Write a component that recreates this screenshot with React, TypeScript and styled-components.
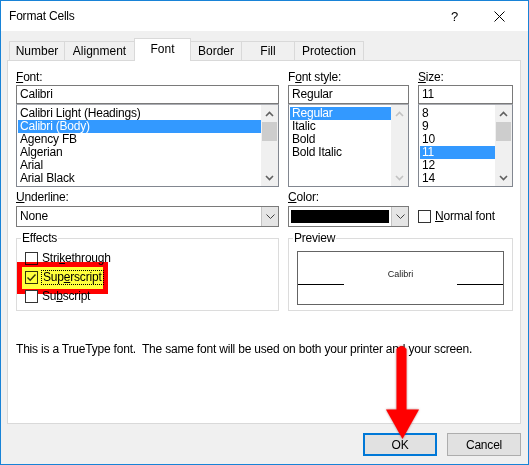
import React from 'react';
import styled, { createGlobalStyle } from 'styled-components';

const Global = createGlobalStyle`
  html, body { margin: 0; padding: 0; background: #ffffff; }
  body { font-family: "Liberation Sans", Arial, sans-serif; font-size: 12px; color: #000; letter-spacing: -0.2px; }
  * { box-sizing: border-box; }
  u { text-underline-offset: 1px; }
`;

const Window = styled.div`
  position: relative;
  width: 529px;
  height: 465px;
  border: 1px solid #1883d7;
  background: #f0f0f0;
  display: flex;
  flex-direction: column;
`;

const TitleBar = styled.div`
  height: 30px;
  background: #ffffff;
  display: flex;
  align-items: center;
  padding-left: 8px;
`;

const Title = styled.div`
  flex: 1;
  font-size: 12px;
  line-height: 15px;
`;

const Help = styled.div`
  font-size: 13px;
  line-height: 15px;
  margin-right: 36px;
`;

const Close = styled.svg`
  width: 11px;
  height: 11px;
  margin-right: 23px;
`;

const Body = styled.div`
  flex: 1;
  display: flex;
  flex-direction: column;
  padding: 7px 7px 0 6px;
`;

const TabStrip = styled.div`
  height: 22px;
  display: flex;
  align-items: flex-start;
  padding-left: 2px;
  position: relative;
  z-index: 1;
`;

const Tab = styled.div<{ $w: number; $active?: boolean }>`
  width: ${p => p.$w}px;
  height: ${p => (p.$active ? 23 : 19)}px;
  margin-top: ${p => (p.$active ? 0 : 3)}px;
  margin-left: -1px;
  &:first-child { margin-left: 0; }
  border: 1px solid #d9d9d9;
  border-bottom: none;
  background: ${p => (p.$active ? '#ffffff' : '#f0f0f0')};
  display: flex;
  align-items: center;
  justify-content: center;
  padding-bottom: ${p => (p.$active ? 2 : 0)}px;
  font-size: 12px;
  letter-spacing: 0;
  position: relative;
  z-index: ${p => (p.$active ? 2 : 1)};
`;

const Panel = styled.div`
  width: 514px;
  height: 364px;
  border: 1px solid #d9d9d9;
  background: #ffffff;
  padding: 9px 7px 0 8px;
  display: flex;
  flex-direction: column;
`;

const Grid = styled.div<{ $mt?: number }>`
  display: grid;
  grid-template-columns: 263px 121px 95px;
  column-gap: 9px;
  margin-top: ${p => p.$mt ?? 0}px;
`;

const Field = styled.div`
  display: flex;
  flex-direction: column;
`;

const Label = styled.div<{ $mb?: number }>`
  line-height: 15px;
  height: 15px;
  margin-bottom: ${p => p.$mb ?? 0}px;
  white-space: nowrap;
`;

const TextBox = styled.div`
  height: 19px;
  border: 1px solid #7a7a7a;
  padding-left: 3px;
  line-height: 17px;
  background: #fff;
`;

const ListBox = styled.div`
  height: 83px;
  border: 1px solid #828790;
  border-top-color: #abadb3;
  display: flex;
  background: #fff;
`;

const Items = styled.div`
  flex: 1;
  padding: 2px 0 0 1px;
  overflow: hidden;
`;

const Item = styled.div<{ $sel?: boolean }>`
  height: 13px;
  line-height: 13px;
  padding-left: 2px;
  white-space: nowrap;
  background: ${p => (p.$sel ? '#3399ff' : 'transparent')};
  color: ${p => (p.$sel ? '#ffffff' : '#000000')};
`;

const ScrollBar = styled.div`
  width: 17px;
  background: #f0f0f0;
  display: flex;
  flex-direction: column;
`;

const ScrollButton = styled.div`
  height: 17px;
  display: flex;
  align-items: center;
  justify-content: center;
`;

const Thumb = styled.div`
  height: 19px;
  margin: 0 1px;
  background: #cdcdcd;
`;

const Spacer = styled.div`
  flex: 1;
`;

const Select = styled.div`
  height: 21px;
  border: 1px solid #7a7a7a;
  display: flex;
  align-items: stretch;
  background: #fff;
`;

const SelectValue = styled.div`
  flex: 1;
  padding-left: 3px;
  line-height: 19px;
`;

const Swatch = styled.div`
  flex: 1;
  margin: 3px 2px 3px 2px;
  background: #000;
`;

const DropButton = styled.div`
  width: 17px;
  background: #e5e5e5;
  border-left: 1px solid #c4c4c4;
  display: flex;
  align-items: center;
  justify-content: center;
`;

const CheckRow = styled.div`
  position: relative;
  height: 19px;
  display: flex;
  align-items: center;
`;

const CheckBox = styled.div`
  width: 13px;
  height: 13px;
  border: 1px solid #333333;
  background: #ffffff;
  display: flex;
  align-items: center;
  justify-content: center;
  flex: none;
`;

const CheckText = styled.span<{ $focus?: boolean }>`
  margin-left: ${p => (p.$focus ? 3 : 4)}px;
  padding: 0 ${p => (p.$focus ? 1 : 0)}px;
  line-height: 13px;
  border: ${p => (p.$focus ? '1px dotted #000' : 'none')};
  white-space: nowrap;
`;

const NormalFont = styled.div`
  display: flex;
  align-items: center;
  height: 21px;
  margin-top: 16px;
`;

const Group = styled.fieldset<{ $pt: number; $span?: boolean }>`
  margin: 4px 0 0 0;
  min-inline-size: 0;
  border: 1px solid #dcdcdc;
  padding: ${p => p.$pt}px 8px 4px 8px;
  display: flex;
  flex-direction: column;
  grid-column: ${p => (p.$span ? '2 / 4' : 'auto')};
`;

const Legend = styled.legend`
  padding: 0 1px;
  margin-left: -4px;
  line-height: 15px;
`;

const PreviewBox = styled.div`
  height: 54px;
  border: 1px solid #646464;
`;

const BaselineRow = styled.div`
  height: 33px;
  display: flex;
  align-items: flex-end;
`;

const BaseLine = styled.div`
  width: 46px;
  height: 1px;
  background: #000;
`;

const Sample = styled.div`
  flex: 1;
  text-align: center;
  font-size: 9px;
  letter-spacing: 0;
  line-height: 11px;
  margin-bottom: 5px;
  color: #1a1a1a;
`;

const Info = styled.div`
  margin-top: 31px;
  line-height: 15px;
  white-space: pre;
`;

const ButtonRow = styled.div`
  display: flex;
  justify-content: flex-end;
  gap: 10px;
  margin-top: 9px;
`;

const Button = styled.div<{ $default?: boolean }>`
  width: 74px;
  height: 23px;
  background: #e1e1e1;
  border: ${p => (p.$default ? '2px solid #0078d7' : '1px solid #adadad')};
  display: flex;
  align-items: center;
  justify-content: center;
  font-size: 12px;
`;

const Highlight = styled.div`
  position: absolute;
  left: -8px;
  top: -6px;
  width: 91px;
  height: 32px;
  border: 5px solid #ff0000;
  background: #ffff3c;
  mix-blend-mode: multiply;
  pointer-events: none;
`;

const Arrow = styled.svg`
  position: absolute;
  left: 384px;
  top: 341px;
  width: 36px;
  height: 100px;
  z-index: 5;
  overflow: visible;
  filter: drop-shadow(0 0 1px rgba(120, 0, 0, 0.5));
`;

const Chevron = ({ up, disabled }: { up?: boolean; disabled?: boolean }) => (
  <svg width="9" height="6" viewBox="0 0 9 6">
    <polyline
      points={up ? '1,5 4.5,1.5 8,5' : '1,1 4.5,4.5 8,1'}
      fill="none"
      stroke={disabled ? '#c2c2c2' : '#606060'}
      strokeWidth="1.6"
    />
  </svg>
);

const DropChevron = () => (
  <svg width="9" height="5" viewBox="0 0 9 5">
    <polyline points="0.5,0.5 4.5,4.5 8.5,0.5" fill="none" stroke="#404040" strokeWidth="1" />
  </svg>
);

const Scroll = ({ thumb, disabled }: { thumb?: boolean; disabled?: boolean }) => (
  <ScrollBar>
    <ScrollButton>
      <Chevron up disabled={disabled} />
    </ScrollButton>
    {thumb && <Thumb />}
    <Spacer />
    <ScrollButton>
      <Chevron disabled={disabled} />
    </ScrollButton>
  </ScrollBar>
);

const fonts = ['Calibri Light (Headings)', 'Calibri (Body)', 'Agency FB', 'Algerian', 'Arial', 'Arial Black'];
const styles = ['Regular', 'Italic', 'Bold', 'Bold Italic'];
const sizes = ['8', '9', '10', '11', '12', '14'];

const tabs: { name: string; w: number; active?: boolean }[] = [
  { name: 'Number', w: 56 },
  { name: 'Alignment', w: 71 },
  { name: 'Font', w: 57, active: true },
  { name: 'Border', w: 52 },
  { name: 'Fill', w: 54 },
  { name: 'Protection', w: 70 },
];

export default function App() {
  return (
    <>
      <Global />
      <Window>
        <TitleBar>
          <Title>Format Cells</Title>
          <Help>?</Help>
          <Close viewBox="0 0 11 11">
            <line x1="0.5" y1="0.5" x2="10.5" y2="10.5" stroke="#000" strokeWidth="1" />
            <line x1="10.5" y1="0.5" x2="0.5" y2="10.5" stroke="#000" strokeWidth="1" />
          </Close>
        </TitleBar>
        <Body>
          <TabStrip>
            {tabs.map(t => (
              <Tab key={t.name} $w={t.w} $active={t.active}>
                {t.name}
              </Tab>
            ))}
          </TabStrip>
          <Panel>
            <Grid>
              <Field>
                <Label>
                  <u>F</u>ont:
                </Label>
                <TextBox>Calibri</TextBox>
                <ListBox>
                  <Items>
                    {fonts.map(f => (
                      <Item key={f} $sel={f === 'Calibri (Body)'}>
                        {f}
                      </Item>
                    ))}
                  </Items>
                  <Scroll thumb />
                </ListBox>
              </Field>
              <Field>
                <Label>
                  F<u>o</u>nt style:
                </Label>
                <TextBox>Regular</TextBox>
                <ListBox>
                  <Items>
                    {styles.map(s => (
                      <Item key={s} $sel={s === 'Regular'}>
                        {s}
                      </Item>
                    ))}
                  </Items>
                  <Scroll disabled />
                </ListBox>
              </Field>
              <Field>
                <Label>
                  <u>S</u>ize:
                </Label>
                <TextBox>11</TextBox>
                <ListBox>
                  <Items>
                    {sizes.map(s => (
                      <Item key={s} $sel={s === '11'}>
                        {s}
                      </Item>
                    ))}
                  </Items>
                  <Scroll thumb />
                </ListBox>
              </Field>
            </Grid>

            <Grid $mt={3}>
              <Field>
                <Label $mb={1}>
                  <u>U</u>nderline:
                </Label>
                <Select>
                  <SelectValue>None</SelectValue>
                  <DropButton>
                    <DropChevron />
                  </DropButton>
                </Select>
              </Field>
              <Field>
                <Label $mb={1}>
                  <u>C</u>olor:
                </Label>
                <Select>
                  <Swatch />
                  <DropButton>
                    <DropChevron />
                  </DropButton>
                </Select>
              </Field>
              <NormalFont>
                <CheckBox />
                <CheckText>
                  <u>N</u>ormal font
                </CheckText>
              </NormalFont>
            </Grid>

            <Grid>
              <Group $pt={3}>
                <Legend>Effects</Legend>
                <CheckRow>
                  <CheckBox />
                  <CheckText>
                    Stri<u>k</u>ethrough
                  </CheckText>
                </CheckRow>
                <CheckRow>
                  <CheckBox>
                    <svg width="11" height="11" viewBox="0 0 11 11">
                      <polyline points="1.5,5.5 4.2,8.2 9.5,2.5" fill="none" stroke="#333" strokeWidth="1.4" />
                    </svg>
                  </CheckBox>
                  <CheckText $focus>
                    Sup<u>e</u>rscript
                  </CheckText>
                  <Highlight />
                </CheckRow>
                <CheckRow>
                  <CheckBox />
                  <CheckText>
                    Su<u>b</u>script
                  </CheckText>
                </CheckRow>
              </Group>
              <Group $pt={5} $span>
                <Legend>Preview</Legend>
                <PreviewBox>
                  <BaselineRow>
                    <BaseLine />
                    <Sample>Calibri</Sample>
                    <BaseLine />
                  </BaselineRow>
                </PreviewBox>
              </Group>
            </Grid>

            <Info>{'This is a TrueType font.  The same font will be used on both your printer and your screen.'}</Info>
          </Panel>
          <ButtonRow>
            <Button $default>OK</Button>
            <Button>Cancel</Button>
          </ButtonRow>
        </Body>
        <Arrow viewBox="0 0 36 100">
          <path d="M11.5 70 L11.5 7 Q16.5 1 21.5 7 L21.5 70 Z" fill="#ff0000" />
          <polygon points="1,67.5 34,67.5 17.5,97" fill="#ff0000" />
        </Arrow>
      </Window>
    </>
  );
}
